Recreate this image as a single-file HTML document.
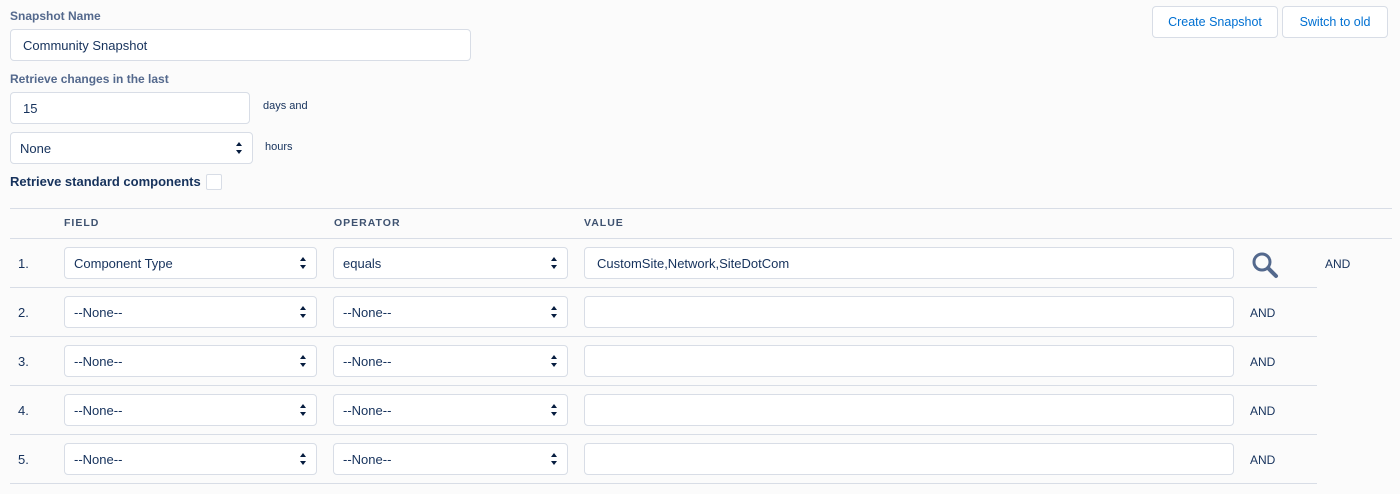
<!DOCTYPE html>
<html><head><style>
body{margin:0;width:1400px;height:494px;background:#fbfbfb;font-family:"Liberation Sans",sans-serif;color:#16325c;position:relative;overflow:hidden}
.a{position:absolute}
.lbl{font-size:12px;color:#54698d;font-weight:bold}
.in{position:absolute;background:#fff;border:1px solid #d8dde6;border-radius:4px;box-sizing:border-box;font-size:13px;color:#16325c;padding-left:12px;display:flex;align-items:center}
.sel::after{content:"";position:absolute;right:10px;top:50%;margin-top:-6px;width:0;height:0;border-left:3px solid transparent;border-right:3px solid transparent;border-bottom:4px solid #061c3f}
.sel::before{content:"";position:absolute;right:10px;top:50%;margin-top:2px;width:0;height:0;border-left:3px solid transparent;border-right:3px solid transparent;border-top:4px solid #061c3f}
.sm{font-size:11px;color:#16325c}
.line{position:absolute;height:1px;background:#d8dde6}
.btn{position:absolute;background:#fff;border:1px solid #d8dde6;border-radius:4px;box-sizing:border-box;color:#0070d2;font-size:12.5px;display:flex;align-items:center;justify-content:center;top:6px;height:32px}
.hd{font-size:10.5px;letter-spacing:1px;color:#3e5270;font-weight:bold;top:217px}
.n{font-size:13px;left:18px}
.and{font-size:12px}
</style></head><body>
<div class="a lbl" style="left:10px;top:9px">Snapshot Name</div>
<div class="in" style="left:10px;top:29px;width:461px;height:32px">Community Snapshot</div>
<div class="a lbl" style="left:10px;top:72px">Retrieve changes in the last</div>
<div class="in" style="left:10px;top:92px;width:240px;height:32px">15</div>
<div class="a sm" style="left:263px;top:100px">days and</div>
<div class="in sel" style="left:10px;top:132px;width:243px;height:32px;padding-left:9px">None</div>
<div class="a sm" style="left:265px;top:141px">hours</div>
<div class="a" style="left:10px;top:174px;font-size:13px;font-weight:bold;color:#16325c">Retrieve standard components</div>
<div class="a" style="left:206px;top:174px;width:16px;height:16px;border:1px solid #d8dde6;box-sizing:border-box;background:#fff;border-radius:2px"></div>
<div class="btn" style="left:1152px;width:126px">Create Snapshot</div>
<div class="btn" style="left:1282px;width:106px">Switch to old</div>
<div class="line" style="left:10px;top:208px;width:1382px"></div>
<div class="a hd" style="left:64px">FIELD</div>
<div class="a hd" style="left:334px">OPERATOR</div>
<div class="a hd" style="left:584px">VALUE</div>
<div class="line" style="left:10px;top:238px;width:1382px"></div>

<div class="a n" style="top:256px">1.</div>
<div class="in sel" style="left:64px;top:247px;width:253px;height:32px;padding-left:9px">Component Type</div>
<div class="in sel" style="left:333px;top:247px;width:235px;height:32px;padding-left:9px">equals</div>
<div class="in" style="left:584px;top:247px;width:650px;height:32px">CustomSite,Network,SiteDotCom</div>
<svg class="a" style="left:1250px;top:250px" width="30" height="30" viewBox="0 0 30 30"><circle cx="12" cy="12" r="8" fill="none" stroke="#54698d" stroke-width="3"/><path d="M18 18L26 26" stroke="#54698d" stroke-width="4" stroke-linecap="round"/></svg>
<div class="a and" style="left:1325px;top:257px">AND</div>
<div class="line" style="left:10px;top:287px;width:1307px"></div>

<div class="a n" style="top:305px">2.</div>
<div class="in sel" style="left:64px;top:296px;width:253px;height:32px;padding-left:9px">--None--</div>
<div class="in sel" style="left:333px;top:296px;width:235px;height:32px;padding-left:9px">--None--</div>
<div class="in" style="left:584px;top:296px;width:650px;height:32px"></div>
<div class="a and" style="left:1250px;top:306px">AND</div>
<div class="line" style="left:10px;top:336px;width:1307px"></div>

<div class="a n" style="top:354px">3.</div>
<div class="in sel" style="left:64px;top:345px;width:253px;height:32px;padding-left:9px">--None--</div>
<div class="in sel" style="left:333px;top:345px;width:235px;height:32px;padding-left:9px">--None--</div>
<div class="in" style="left:584px;top:345px;width:650px;height:32px"></div>
<div class="a and" style="left:1250px;top:355px">AND</div>
<div class="line" style="left:10px;top:385px;width:1307px"></div>

<div class="a n" style="top:403px">4.</div>
<div class="in sel" style="left:64px;top:394px;width:253px;height:32px;padding-left:9px">--None--</div>
<div class="in sel" style="left:333px;top:394px;width:235px;height:32px;padding-left:9px">--None--</div>
<div class="in" style="left:584px;top:394px;width:650px;height:32px"></div>
<div class="a and" style="left:1250px;top:404px">AND</div>
<div class="line" style="left:10px;top:434px;width:1307px"></div>

<div class="a n" style="top:452px">5.</div>
<div class="in sel" style="left:64px;top:443px;width:253px;height:32px;padding-left:9px">--None--</div>
<div class="in sel" style="left:333px;top:443px;width:235px;height:32px;padding-left:9px">--None--</div>
<div class="in" style="left:584px;top:443px;width:650px;height:32px"></div>
<div class="a and" style="left:1250px;top:453px">AND</div>
<div class="line" style="left:10px;top:483px;width:1307px"></div>
</body></html>
